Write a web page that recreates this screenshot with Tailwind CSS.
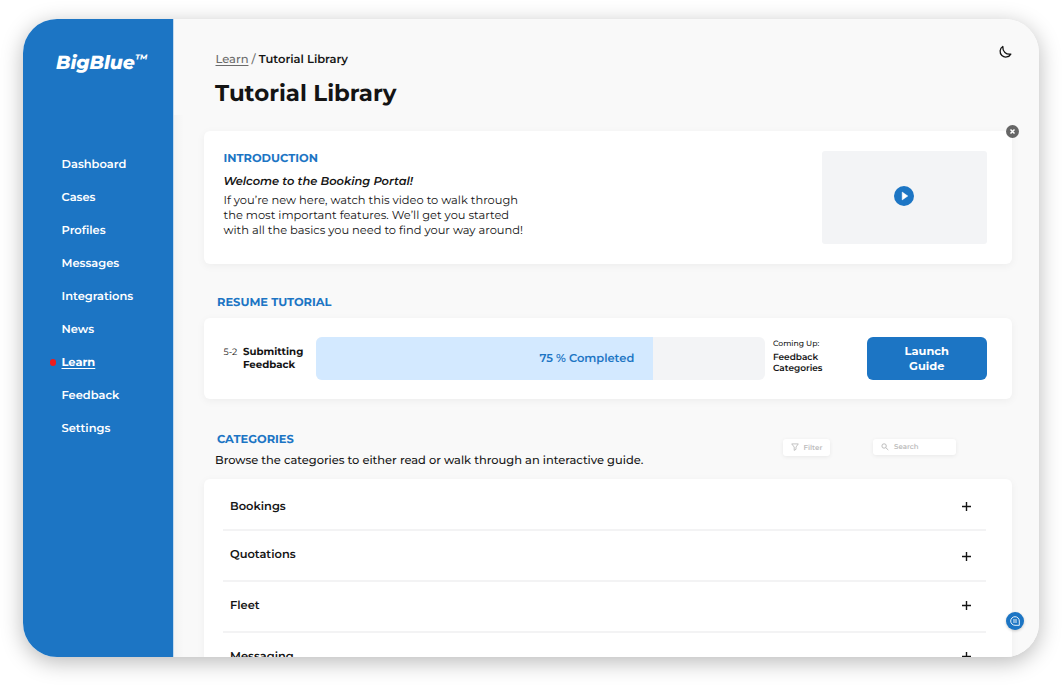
<!DOCTYPE html>
<html lang="en">
<head>
<meta charset="utf-8">
<title>BigBlue – Tutorial Library</title>
<script src="https://cdn.jsdelivr.net/npm/@tailwindcss/browser@4"></script>
</head>
<body class="h-[685px] w-[1062px] overflow-hidden bg-white pt-[19px] pl-[23px] font-['Montserrat','Inter',sans-serif] text-[#141414] [text-rendering:geometricPrecision]">
<div class="relative flex h-[638px] w-[1015.5px] rounded-[34px] shadow-[0_5px_22px_rgba(0,0,0,0.28)]">
<div class="flex h-full w-full overflow-hidden rounded-[34px] bg-[#f9f9f9]">

  <aside class="h-full w-[151px] shrink-0 border-r border-[#c3daee] bg-[#1c75c4] text-white">
    <div class="flex h-[87px] items-center pt-px pl-[33px]">
      <span class="text-[18.8px] leading-[20px] font-extrabold italic">BigBlue</span><span class="-mt-[6px] text-[12px] leading-[14px] font-bold italic">™</span>
    </div>
    <nav class="mt-[42px] flex flex-col pl-[38.5px] text-[11.44px] font-semibold *:flex *:h-[33px] *:items-center">
      <a>Dashboard</a>
      <a>Cases</a>
      <a>Profiles</a>
      <a>Messages</a>
      <a>Integrations</a>
      <a>News</a>
      <a class="-ml-[12px] gap-[5.5px]"><i class="size-[6.5px] rounded-full bg-[#ef1c1c]"></i><span class="font-bold underline decoration-1 underline-offset-[2px]">Learn</span></a>
      <a>Feedback</a>
      <a>Settings</a>
    </nav>
  </aside>

  <main class="relative h-full flex-1 pl-[30px]">
    <div class="absolute top-[96px] bottom-0 left-0 w-[10px] bg-gradient-to-r from-black/[0.025] to-transparent"></div>

    <header class="flex h-[112px] justify-between pt-8 pl-[11.5px]">
      <div>
        <div class="h-4 text-[11.5px] leading-4 font-semibold"><span class="font-medium text-[#6b6b6b]"><span class="underline decoration-1 underline-offset-[2px]">Learn</span> / </span>Tutorial Library</div>
        <h1 class="mt-[11.5px] -ml-[0.5px] text-[22.9px] leading-[28px] font-bold">Tutorial Library</h1>
      </div>
      <svg class="mt-[-6px] mr-[26.5px] size-[14px]" viewBox="0 0 14 14" fill="none" stroke="#141414" stroke-width="1.3" stroke-linejoin="round"><path d="M4.800 1.500A5.700 5.700 0 1 0 12.800 9.100C8 9.800 4.500 6.600 4.800 1.500Z"/></svg>
    </header>

    <section class="relative flex h-[132.5px] w-[808px] justify-between rounded-md bg-white pt-5 pr-[25.5px] pl-[19.5px] shadow-[0_2px_8px_rgba(0,0,0,0.05)]">
      <div class="text-[11.44px] leading-[15px]">
        <h2 class="font-bold text-[#1c75c4]">INTRODUCTION</h2>
        <p class="mt-2 font-semibold italic">Welcome to the Booking Portal!</p>
        <p class="mt-1 whitespace-nowrap text-[#141414]">If you’re new here, watch this video to walk through<br>the most important features. We’ll get you started<br>with all the basics you need to find your way around!</p>
      </div>
      <div class="-mt-[0.5px] flex h-[93.5px] w-[165px] items-center justify-center rounded-[3px] bg-[#f3f4f6]">
        <svg class="-mt-[2px] size-5" viewBox="0 0 20 20"><circle cx="10" cy="10" r="10" fill="#1c75c4"/><path d="M8.200 6.100V13.900L13.800 10Z" fill="#fff" stroke="#fff" stroke-width=".5" stroke-linejoin="round"/></svg>
      </div>
      <svg class="absolute -top-[6.5px] -right-[6.5px] size-[13px]" viewBox="0 0 13 13"><circle cx="6.500" cy="6.500" r="6.500" fill="#666"/><path d="M4.500 4.500l4 4M8.500 4.500l-4 4" stroke="#fff" stroke-width="1.500"/></svg>
    </section>

    <h2 class="mt-[31px] h-[15px] pl-[13px] text-[11.44px] leading-[15px] font-bold text-[#1c75c4]">RESUME TUTORIAL</h2>
    <section class="mt-[8.5px] flex h-[81px] w-[808px] items-center rounded-md bg-white pr-[25.5px] pl-[19.5px] shadow-[0_2px_8px_rgba(0,0,0,0.05)]">
      <div class="w-[19.5px] self-start pt-[28px] text-[9.2px] leading-[13px] whitespace-nowrap text-[#141414]">5-2</div>
      <div class="-mt-[2px] w-[73px] text-[10.2px] leading-[13px] font-bold">Submitting<br>Feedback</div>
      <div class="h-[43px] w-[449px] overflow-hidden rounded-md bg-[#f3f4f6]">
        <div class="flex h-full w-3/4 items-center justify-end bg-[#d3e9ff] pr-[18.5px] text-[11.44px] font-semibold text-[#1c75c4]">75 % Completed</div>
      </div>
      <div class="ml-2 w-[94px] self-start pt-[20px] font-semibold">
        <div class="text-[7.7px] leading-[11px] font-medium">Coming Up:</div>
        <div class="mt-[2.5px] text-[8.95px] leading-[11px]">Feedback<br>Categories</div>
      </div>
      <button class="h-[43px] w-[119.5px] rounded-md bg-[#1c75c4] text-[11.44px] leading-[15px] font-bold text-white">Launch<br>Guide</button>
    </section>

    <div class="mt-[32.5px] flex h-[47.5px] w-[808px]">
      <div class="w-[578.5px] pl-[11px]">
        <h2 class="pl-[2px] text-[11.44px] leading-[15px] font-bold text-[#1c75c4]">CATEGORIES</h2>
        <p class="mt-[6px] text-[11.44px] leading-[15px] font-medium whitespace-nowrap">Browse the categories to either read or walk through an interactive guide.</p>
      </div>
      <div class="mt-[7.5px] flex h-[16.5px] w-[47px] items-center gap-[5px] rounded-[3px] bg-white pl-2 text-[7.1px] leading-[9px] font-semibold text-[#bdbdbd] shadow-[0_1px_4px_rgba(0,0,0,0.07)]">
        <svg class="size-2" viewBox="0 0 8 8" fill="none" stroke="#b5b5b5" stroke-width=".8" stroke-linejoin="round"><path d="M.700.900H7.300L5 4V6.300L3.200 7.400V4Z"/></svg>Filter
      </div>
      <div class="mt-[7px] ml-[43.5px] flex h-[16.5px] w-[83px] items-center gap-[5px] rounded-[3px] bg-white pl-2 text-[7px] leading-[9px] font-semibold text-[#bdbdbd] shadow-[0_1px_4px_rgba(0,0,0,0.07)]">
        <svg class="size-2" viewBox="0 0 8 8" fill="none" stroke="#b5b5b5" stroke-width=".9"><circle cx="3.100" cy="3" r="2.200"/><path d="M4.800 4.700L7.300 7"/></svg>Search
      </div>
    </div>

    <section class="w-[808px] rounded-t-md bg-white pr-[26px] pl-[19px] text-[11.44px] leading-4 font-semibold shadow-[0_2px_8px_rgba(0,0,0,0.05)] [&_svg]:size-[11px] [&_svg]:shrink-0 [&>div]:flex [&>div]:items-start [&>div]:justify-between [&>div]:border-[#f3f3f4] [&>div]:pr-[14.5px] [&>div]:pl-[7px]">
      <div class="h-[52px] border-b-2 pt-[18.5px]">Bookings<svg class="mt-[3px]" viewBox="0 0 11 11" stroke="#141414" stroke-width="1.400"><path d="M1 5.500H10M5.500 1V10"/></svg></div>
      <div class="h-[51px] border-b-2 pt-[15px]">Quotations<svg class="mt-[5px]" viewBox="0 0 11 11" stroke="#141414" stroke-width="1.400"><path d="M1 5.500H10M5.500 1V10"/></svg></div>
      <div class="h-[51px] border-b-2 pt-[15px]">Fleet<svg class="mt-[2.5px]" viewBox="0 0 11 11" stroke="#141414" stroke-width="1.400"><path d="M1 5.500H10M5.500 1V10"/></svg></div>
      <div class="h-[51px] pt-[15px]">Messaging<svg class="mt-[2.5px]" viewBox="0 0 11 11" stroke="#141414" stroke-width="1.400"><path d="M1 5.500H10M5.500 1V10"/></svg></div>
    </section>
  </main>
</div>
  <div class="absolute right-[14.5px] bottom-[27px] flex size-[18px] items-center justify-center rounded-full bg-[#1c75c4] shadow-[0_1px_3px_rgba(0,0,0,0.2)]">
    <svg class="size-[10px]" viewBox="0 0 10 10" fill="none" stroke="#fff" stroke-width=".9"><path d="M5 .7A4.300 4.300 0 1 0 5 9.300H9.300V5A4.300 4.300 0 0 0 5 .7ZM3 4H7M3 6H7"/></svg>
  </div>
</div>
</body>
</html>
